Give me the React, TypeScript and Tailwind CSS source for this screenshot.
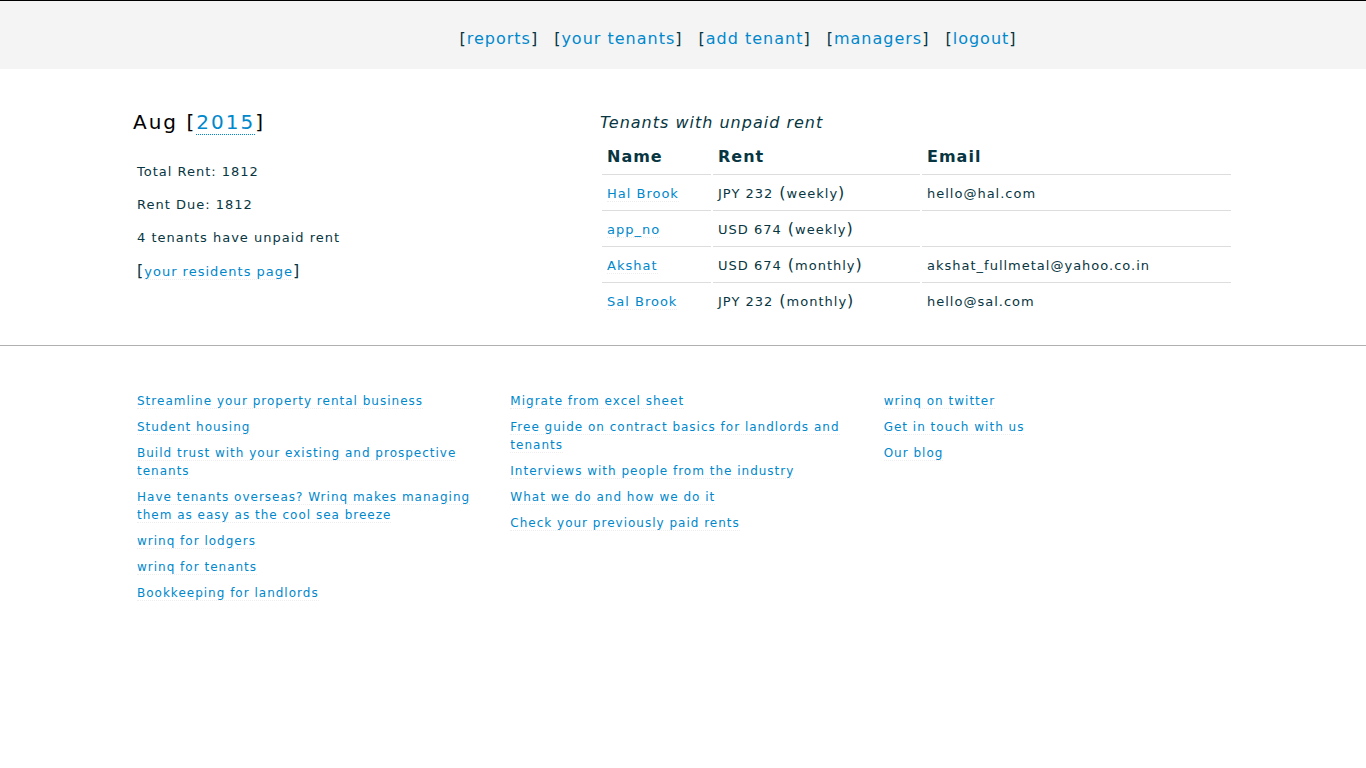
const navItems = ["reports", "your tenants", "add tenant", "managers", "logout"];

const tenants = [
  { name: "Hal Brook", amount: "JPY 232", period: "weekly", email: "hello@hal.com" },
  { name: "app_no", amount: "USD 674", period: "weekly", email: "" },
  { name: "Akshat", amount: "USD 674", period: "monthly", email: "akshat_fullmetal@yahoo.co.in" },
  { name: "Sal Brook", amount: "JPY 232", period: "monthly", email: "hello@sal.com" },
];

const footerColumns = [
  [
    "Streamline your property rental business",
    "Student housing",
    "Build trust with your existing and prospective tenants",
    "Have tenants overseas? Wrinq makes managing them as easy as the cool sea breeze",
    "wrinq for lodgers",
    "wrinq for tenants",
    "Bookkeeping for landlords",
  ],
  [
    "Migrate from excel sheet",
    "Free guide on contract basics for landlords and tenants",
    "Interviews with people from the industry",
    "What we do and how we do it",
    "Check your previously paid rents",
  ],
  ["wrinq on twitter", "Get in touch with us", "Our blog"],
];

const link = "text-[#0088cc] border-b border-dotted border-[#eeeeee]";
const cell = "border-b border-[#dddddd] px-[5px] pt-[6px] pb-1 leading-6";

export default function App() {
  return (
    <div className="min-h-screen bg-white font-['Verdana','DejaVu_Sans',sans-serif] text-base tracking-[1px] text-[#073642]">
      <header className="border-t border-black bg-[#f4f4f4] pt-[26px] pb-[18px]">
        <nav className="mx-auto flex max-w-[1100px] flex-wrap justify-center gap-x-4 pl-[110px] leading-6">
          {navItems.map((item) => (
            <span key={item}>
              [<a href="#" className="text-[#0088cc]">{item}</a>]
            </span>
          ))}
        </nav>
      </header>

      <main className="mx-auto grid max-w-[1100px] grid-cols-[467fr_633fr] pt-[39px] pb-[27px]">
        <section>
          <h1 className="text-xl leading-7 tracking-[2px] text-black">
            Aug [<a href="#" className="border-b border-dotted border-[#0088cc] text-[#0088cc]">2015</a>]
          </h1>
          <div className="flex flex-col gap-[9px] px-1 pt-6 text-[13px] leading-6">
            <p>Total Rent: 1812</p>
            <p>Rent Due: 1812</p>
            <p>4 tenants have unpaid rent</p>
            <p className="text-base leading-6">
              [<a href="#" className={`${link} text-[13px]`}>your residents page</a>]
            </p>
          </div>
        </section>

        <section>
          <table className="w-full table-fixed border-separate border-spacing-x-[2px] border-spacing-y-0 text-left">
            <caption className="pt-[3px] pb-1 text-left leading-6 italic">Tenants with unpaid rent</caption>
            <colgroup>
              <col className="w-[109px]" />
              <col className="w-[207px]" />
              <col />
            </colgroup>
            <thead>
              <tr>
                {["Name", "Rent", "Email"].map((h) => (
                  <th key={h} className="border-b border-[#dddddd] px-[5px] pt-[6px] pb-[5px] leading-6 font-bold">{h}</th>
                ))}
              </tr>
            </thead>
            <tbody className="[&>tr:last-child>td]:border-0">
              {tenants.map((t) => (
                <tr key={t.name}>
                  <td className={cell}>
                    <a href="#" className={`${link} text-[13px]`}>{t.name}</a>
                  </td>
                  <td className={cell}>
                    <span className="text-[13px]">{t.amount}</span> (<span className="text-[13px]">{t.period}</span>)
                  </td>
                  <td className={cell}>
                    <span className="text-[13px]">{t.email}</span>
                  </td>
                </tr>
              ))}
            </tbody>
          </table>
        </section>
      </main>

      <footer className="border-t border-[#b0b0b0] pt-[46px] pb-10">
        <div className="mx-auto grid max-w-[1100px] grid-cols-3 gap-x-6 pl-1 text-xs leading-[18px]">
          {footerColumns.map((items) => (
            <ul key={items[0]} className="flex flex-col gap-2">
              {items.map((item) => (
                <li key={item}>
                  <a href="#" className={link}>{item}</a>
                </li>
              ))}
            </ul>
          ))}
        </div>
      </footer>
    </div>
  );
}
